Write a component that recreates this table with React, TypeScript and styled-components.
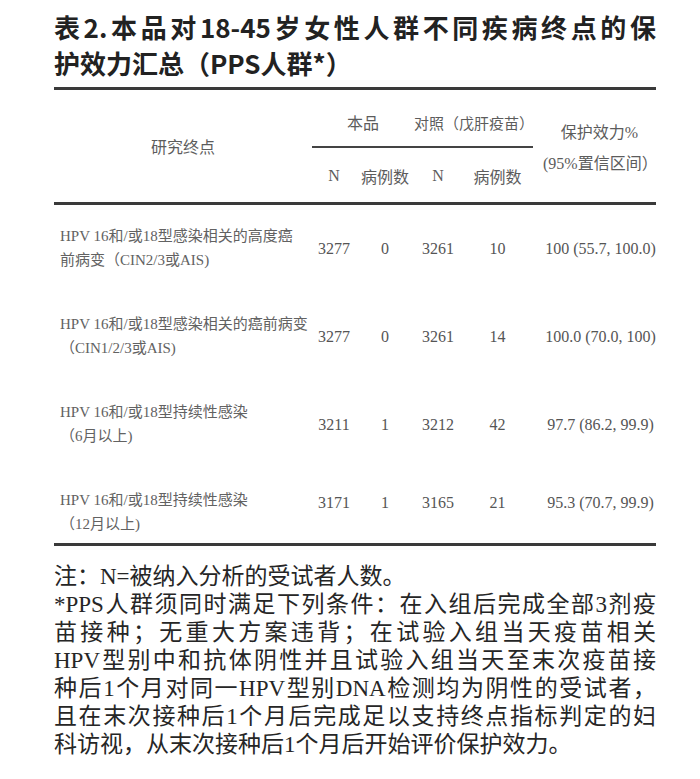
import React from 'react'
import styled, { createGlobalStyle } from 'styled-components'

const GlobalStyle = createGlobalStyle`
  html, body {
    margin: 0;
    padding: 0;
    background: #ffffff;
  }
`

const Page = styled.div`
  width: 602px;
  padding: 9px 44px 0 54px;
`

const Title = styled.h1`
  margin: 0 0 6px;
  font-family: "Noto Sans CJK SC", "Liberation Sans", sans-serif;
  font-weight: 700;
  font-size: 26px;
  line-height: 36px;
  color: #222;
`

const TitleLine = styled.span<{ $justify?: boolean }>`
  display: block;
  text-align: ${({ $justify }) => ($justify ? 'justify' : 'left')};
  text-align-last: ${({ $justify }) => ($justify ? 'justify' : 'auto')};
`

const Table = styled.table`
  width: 602px;
  border-collapse: collapse;
  table-layout: fixed;
  border-top: 3px solid #3a3a3a;
  border-bottom: 3px solid #3a3a3a;
  font-family: "Liberation Serif", "Noto Sans CJK SC", serif;
  color: #5c5c5c;
`

const Th = styled.th<{ $rule?: 'sub' | 'main'; $height?: number }>`
  font-weight: 400;
  font-size: 16px;
  text-align: center;
  vertical-align: middle;
  padding: 0;
  white-space: nowrap;
  height: ${({ $height }) => ($height ? `${$height}px` : 'auto')};
  border-bottom: ${({ $rule }) =>
    $rule === 'sub' ? '2px solid #444' : $rule === 'main' ? '3px solid #3a3a3a' : 'none'};
`

const HeadText = styled.span<{ $shift?: number; $small?: boolean }>`
  display: block;
  position: relative;
  top: ${({ $shift = 0 }) => `${$shift}px`};
  font-size: ${({ $small }) => ($small ? '15px' : 'inherit')};
`

const EffHead = styled.span`
  display: block;
  line-height: 31px;
  padding-left: 10px;
  padding-top: 4px;
`

const BodyRow = styled.tr`
  &:last-child > td {
    padding-bottom: 7px;
  }
`

const LabelCell = styled.td`
  padding: 19px 0 21px 6px;
  font-size: 15px;
  line-height: 24px;
  text-align: left;
  white-space: nowrap;
  color: #626262;
`

const NumCell = styled.td<{ $eff?: boolean }>`
  padding: 0 0 0 ${({ $eff }) => ($eff ? '12px' : '0')};
  font-size: 16px;
  text-align: center;
  vertical-align: middle;
  white-space: nowrap;
  color: #555;
`

const LabelLine = styled.span`
  display: block;
`

const Notes = styled.div`
  margin-top: 17px;
  font-family: "Liberation Serif", "Noto Sans CJK SC", serif;
  font-size: 23px;
  line-height: 28px;
  color: #262626;
`

const NoteLine = styled.span<{ $justify?: boolean }>`
  display: block;
  text-align: ${({ $justify }) => ($justify ? 'justify' : 'left')};
  text-align-last: ${({ $justify }) => ($justify ? 'justify' : 'auto')};
`

type Row = {
  label: [string, string]
  n1: string
  c1: string
  n2: string
  c2: string
  eff: string
}

const rows: Row[] = [
  {
    label: ['HPV 16和/或18型感染相关的高度癌', '前病变（CIN2/3或AIS)'],
    n1: '3277',
    c1: '0',
    n2: '3261',
    c2: '10',
    eff: '100 (55.7, 100.0)'
  },
  {
    label: ['HPV 16和/或18型感染相关的癌前病变', '（CIN1/2/3或AIS)'],
    n1: '3277',
    c1: '0',
    n2: '3261',
    c2: '14',
    eff: '100.0 (70.0, 100)'
  },
  {
    label: ['HPV 16和/或18型持续性感染', '（6月以上)'],
    n1: '3211',
    c1: '1',
    n2: '3212',
    c2: '42',
    eff: '97.7 (86.2, 99.9)'
  },
  {
    label: ['HPV 16和/或18型持续性感染', '（12月以上)'],
    n1: '3171',
    c1: '1',
    n2: '3165',
    c2: '21',
    eff: '95.3 (70.7, 99.9)'
  }
]

const notes: { text: string; justify?: boolean }[] = [
  { text: '注：N=被纳入分析的受试者人数。' },
  { text: '*PPS人群须同时满足下列条件：在入组后完成全部3剂疫', justify: true },
  { text: '苗接种；无重大方案违背；在试验入组当天疫苗相关', justify: true },
  { text: 'HPV型别中和抗体阴性并且试验入组当天至末次疫苗接', justify: true },
  { text: '种后1个月对同一HPV型别DNA检测均为阴性的受试者，', justify: true },
  { text: '且在末次接种后1个月后完成足以支持终点指标判定的妇', justify: true },
  { text: '科访视，从末次接种后1个月后开始评价保护效力。' }
]

const App = () => (
  <>
    <GlobalStyle />
    <Page>
      <Title>
        <TitleLine $justify>表2.本品对18-45岁女性人群不同疾病终点的保</TitleLine>
        <TitleLine>护效力汇总（PPS人群*）</TitleLine>
      </Title>

      <Table>
        <colgroup>
          <col style={{ width: 258 }} />
          <col style={{ width: 44 }} />
          <col style={{ width: 58 }} />
          <col style={{ width: 48 }} />
          <col style={{ width: 71 }} />
          <col style={{ width: 123 }} />
        </colgroup>
        <thead>
          <tr>
            <Th rowSpan={2} $rule="main">研究终点</Th>
            <Th colSpan={2} $rule="sub" $height={56}>
              <HeadText $shift={4}>本品</HeadText>
            </Th>
            <Th colSpan={2} $rule="sub" $height={56}>
              <HeadText $shift={4} $small>
                对照（戊肝疫苗）
              </HeadText>
            </Th>
            <Th rowSpan={2} $rule="main">
              <EffHead>
                保护效力%
                <br />
                (95%置信区间）
              </EffHead>
            </Th>
          </tr>
          <tr>
            <Th $rule="main" $height={54}>
              <HeadText $shift={1}>N</HeadText>
            </Th>
            <Th $rule="main" $height={54}>
              <HeadText $shift={1}>病例数</HeadText>
            </Th>
            <Th $rule="main" $height={54}>
              <HeadText $shift={1}>N</HeadText>
            </Th>
            <Th $rule="main" $height={54}>
              <HeadText $shift={1}>病例数</HeadText>
            </Th>
          </tr>
        </thead>
        <tbody>
          {rows.map((row, i) => (
            <BodyRow key={i}>
              <LabelCell>
                <LabelLine>{row.label[0]}</LabelLine>
                <LabelLine>{row.label[1]}</LabelLine>
              </LabelCell>
              <NumCell>{row.n1}</NumCell>
              <NumCell>{row.c1}</NumCell>
              <NumCell>{row.n2}</NumCell>
              <NumCell>{row.c2}</NumCell>
              <NumCell $eff>{row.eff}</NumCell>
            </BodyRow>
          ))}
        </tbody>
      </Table>

      <Notes>
        {notes.map((line, i) => (
          <NoteLine key={i} $justify={line.justify}>
            {line.text}
          </NoteLine>
        ))}
      </Notes>
    </Page>
  </>
)

export default App
